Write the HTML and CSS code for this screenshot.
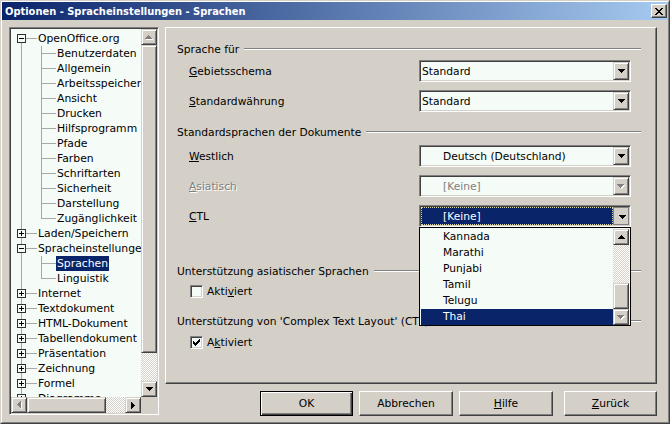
FILE: index.html
```html
<!DOCTYPE html>
<html lang="de">
<head>
<meta charset="utf-8">
<title>Optionen - Spracheinstellungen - Sprachen</title>
<link rel="stylesheet" href="styles.css">
</head>
<body>
<div class="window">
  <div class="frame">
    <div class="titlebar">
      <span class="title">Optionen - Spracheinstellungen - Sprachen</span>
      <span class="close"><svg width="8" height="7" viewBox="0 0 8 7"><path d="M0 0h2v1H0zM6 0h2v1H6zM1 1h2v1H1zM5 1h2v1H5zM2 2h4v1H2zM3 3h2v1H3zM2 4h4v1H2zM1 5h2v1H1zM5 5h2v1H5zM0 6h2v1H0zM6 6h2v1H6z" fill="#000"/></svg></span>
    </div>
    <div class="main">
      <div class="tree">
        <div class="tree-top">
          <div class="rows">
            <div class="row"><span class="g x first"><span class="box minus"></span></span><span class="dash"></span><span class="lbl">OpenOffice.org</span></div>
            <div class="row"><span class="g v"></span><span class="g t"></span><span class="dash c"></span><span class="lbl">Benutzerdaten</span></div>
            <div class="row"><span class="g v"></span><span class="g t"></span><span class="dash c"></span><span class="lbl">Allgemein</span></div>
            <div class="row"><span class="g v"></span><span class="g t"></span><span class="dash c"></span><span class="lbl">Arbeitsspeicher</span></div>
            <div class="row"><span class="g v"></span><span class="g t"></span><span class="dash c"></span><span class="lbl">Ansicht</span></div>
            <div class="row"><span class="g v"></span><span class="g t"></span><span class="dash c"></span><span class="lbl">Drucken</span></div>
            <div class="row"><span class="g v"></span><span class="g t"></span><span class="dash c"></span><span class="lbl">Hilfsprogramm</span></div>
            <div class="row"><span class="g v"></span><span class="g t"></span><span class="dash c"></span><span class="lbl">Pfade</span></div>
            <div class="row"><span class="g v"></span><span class="g t"></span><span class="dash c"></span><span class="lbl">Farben</span></div>
            <div class="row"><span class="g v"></span><span class="g t"></span><span class="dash c"></span><span class="lbl">Schriftarten</span></div>
            <div class="row"><span class="g v"></span><span class="g t"></span><span class="dash c"></span><span class="lbl">Sicherheit</span></div>
            <div class="row"><span class="g v"></span><span class="g t"></span><span class="dash c"></span><span class="lbl">Darstellung</span></div>
            <div class="row"><span class="g v"></span><span class="g l"></span><span class="dash c"></span><span class="lbl">Zugänglichkeit</span></div>
            <div class="row"><span class="g x"><span class="box plus"></span></span><span class="dash"></span><span class="lbl">Laden/Speichern</span></div>
            <div class="row"><span class="g x"><span class="box minus"></span></span><span class="dash"></span><span class="lbl">Spracheinstellungen</span></div>
            <div class="row"><span class="g v"></span><span class="g t"></span><span class="dash c"></span><span class="lbl sel">Sprachen</span></div>
            <div class="row"><span class="g v"></span><span class="g l"></span><span class="dash c"></span><span class="lbl">Linguistik</span></div>
            <div class="row"><span class="g x"><span class="box plus"></span></span><span class="dash"></span><span class="lbl">Internet</span></div>
            <div class="row"><span class="g x"><span class="box plus"></span></span><span class="dash"></span><span class="lbl">Textdokument</span></div>
            <div class="row"><span class="g x"><span class="box plus"></span></span><span class="dash"></span><span class="lbl">HTML-Dokument</span></div>
            <div class="row"><span class="g x"><span class="box plus"></span></span><span class="dash"></span><span class="lbl">Tabellendokument</span></div>
            <div class="row"><span class="g x"><span class="box plus"></span></span><span class="dash"></span><span class="lbl">Präsentation</span></div>
            <div class="row"><span class="g x"><span class="box plus"></span></span><span class="dash"></span><span class="lbl">Zeichnung</span></div>
            <div class="row"><span class="g x"><span class="box plus"></span></span><span class="dash"></span><span class="lbl">Formel</span></div>
            <div class="row"><span class="g x"><span class="box plus"></span></span><span class="dash"></span><span class="lbl">Diagramme</span></div>
          </div>
          <div class="vscroll">
            <div class="sbtn"><svg width="8" height="5" viewBox="0 0 8 5"><path d="M4 1h1v1H4zM3 2h3v1H3zM2 3h5v1H2zM1 4h7v1H1z" fill="#fff"/><path d="M3 0h1v1H3zM2 1h3v1H2zM1 2h5v1H1zM0 3h7v1H0z" fill="#808080"/></svg></div>
            <div class="sthumb vth"></div>
            <div class="strack"></div>
            <div class="sbtn"><svg width="7" height="4" viewBox="0 0 7 4"><path d="M0 0h7v1H0zM1 1h5v1H1zM2 2h3v1H2zM3 3h1v1H3z" fill="#000"/></svg></div>
          </div>
        </div>
        <div class="hscroll">
          <div class="sbtn"><svg width="5" height="8" viewBox="0 0 5 8"><path d="M1 4h1v1H1zM2 3h1v3H2zM3 2h1v5H3zM4 1h1v7H4z" fill="#fff"/><path d="M0 3h1v1H0zM1 2h1v3H1zM2 1h1v5H2zM3 0h1v7H3z" fill="#808080"/></svg></div>
          <div class="sthumb hth"></div>
          <div class="strack htr"></div>
          <div class="sbtn"><svg width="4" height="7" viewBox="0 0 4 7"><path d="M0 0h1v7H0zM1 1h1v5H1zM2 2h1v3H2zM3 3h1v1H3z" fill="#000"/></svg></div>
          <div class="corner"></div>
        </div>
      </div>

      <div class="rightcol">
        <div class="page">
          <div class="head"><span>Sprache für</span><span class="rule"></span></div>
          <div class="field mt3"><span class="flabel"><u>G</u>ebietsschema</span>
            <div class="combo"><div class="ctext">Standard</div><div class="cbtn"><svg width="7" height="4" viewBox="0 0 7 4"><path d="M0 0h7v1H0zM1 1h5v1H1zM2 2h3v1H2zM3 3h1v1H3z" fill="#000"/></svg></div></div>
          </div>
          <div class="field mt8"><span class="flabel"><u>S</u>tandardwährung</span>
            <div class="combo"><div class="ctext">Standard</div><div class="cbtn"><svg width="7" height="4" viewBox="0 0 7 4"><path d="M0 0h7v1H0zM1 1h5v1H1zM2 2h3v1H2zM3 3h1v1H3z" fill="#000"/></svg></div></div>
          </div>

          <div class="head mt12"><span>Standardsprachen der Dokumente</span><span class="rule"></span></div>
          <div class="field mt5"><span class="flabel"><u>W</u>estlich</span>
            <div class="combo"><div class="ctext lang">Deutsch (Deutschland)</div><div class="cbtn"><svg width="7" height="4" viewBox="0 0 7 4"><path d="M0 0h7v1H0zM1 1h5v1H1zM2 2h3v1H2zM3 3h1v1H3z" fill="#000"/></svg></div></div>
          </div>
          <div class="field mt8"><span class="flabel disabled"><u>A</u>siatisch</span>
            <div class="combo"><div class="ctext lang gray">[Keine]</div><div class="cbtn"><svg width="8" height="5" viewBox="0 0 8 5"><path d="M1 1h7v1H1zM2 2h5v1H2zM3 3h3v1H3zM4 4h1v1H4z" fill="#fff"/><path d="M0 0h7v1H0zM1 1h5v1H1zM2 2h3v1H2zM3 3h1v1H3z" fill="#808080"/></svg></div></div>
          </div>
          <div class="field mt8"><span class="flabel"><u>C</u>TL</span>
            <div class="combo open"><div class="ctext lang focus">[Keine]</div><div class="cbtn pressed"><svg width="7" height="4" viewBox="0 0 7 4"><path d="M0 0h7v1H0zM1 1h5v1H1zM2 2h3v1H2zM3 3h1v1H3z" fill="#000"/></svg></div>
              <div class="dlist">
                <div class="items">
                  <div class="item">Kannada</div>
                  <div class="item">Marathi</div>
                  <div class="item">Punjabi</div>
                  <div class="item">Tamil</div>
                  <div class="item">Telugu</div>
                  <div class="item hi">Thai</div>
                </div>
                <div class="lscroll">
                  <div class="sbtn"><svg width="7" height="4" viewBox="0 0 7 4"><path d="M3 0h1v1H3zM2 1h3v1H2zM1 2h5v1H1zM0 3h7v1H0z" fill="#000"/></svg></div>
                  <div class="strack ltr"></div>
                  <div class="sthumb lth"></div>
                  <div class="sbtn"><svg width="8" height="5" viewBox="0 0 8 5"><path d="M1 1h7v1H1zM2 2h5v1H2zM3 3h3v1H3zM4 4h1v1H4z" fill="#fff"/><path d="M0 0h7v1H0zM1 1h5v1H1zM2 2h3v1H2zM3 3h1v1H3z" fill="#808080"/></svg></div>
                </div>
              </div>
            </div>
          </div>

          <div class="head mt36"><span>Unterstützung asiatischer Sprachen</span><span class="rule"></span></div>
          <div class="check mt4"><span class="cbox"></span><span>Akti<u>v</u>iert</span></div>

          <div class="head mt14"><span>Unterstützung von 'Complex Text Layout' (CTL)</span><span class="rule"></span></div>
          <div class="check mt5"><span class="cbox"><svg width="7" height="7" viewBox="0 0 7 7"><path d="M0 2h1v3H0zM1 3h1v3H1zM2 4h1v3H2zM3 3h1v3H3zM4 2h1v3H4zM5 1h1v3H5zM6 0h1v3H6z" fill="#000"/></svg></span><span>A<u>k</u>tiviert</span></div>
        </div>

        <div class="buttons">
          <div class="btn default w93">OK</div>
          <div class="btn">Abbrechen</div>
          <div class="btn"><span><u>H</u>ilfe</span></div>
          <div class="btn w93 gap"><span><u>Z</u>urück</span></div>
        </div>
      </div>
    </div>
  </div>
</div>
</body>
</html>
```

FILE: styles.css
```css
* { box-sizing: border-box; }
html, body { margin: 0; padding: 0; }
body {
  width: 670px; height: 424px; overflow: hidden;
  background: #d4d0c8;
  font-family: "DejaVu Sans", "Liberation Sans", sans-serif;
  font-size: 10.7px; color: #000;
}
u { text-decoration: underline; text-underline-offset: 1px; }

.window {
  width: 670px; height: 424px;
  border: 1px solid; border-color: #d4d0c8 #404040 #404040 #d4d0c8;
}
.frame {
  height: 100%;
  border: 1px solid; border-color: #fff #808080 #808080 #fff;
  display: flex; flex-direction: column;
}
.titlebar {
  height: 18px; flex: none;
  display: flex; align-items: center;
  background: linear-gradient(to right, #0a246a, #a6caf0);
  color: #fff;
}
.title {
  flex: 1;
  padding-left: 3px;
  font-family: "DejaVu Sans Condensed", "DejaVu Sans", sans-serif;
  font-stretch: condensed;
  font-weight: bold; font-size: 11px;
  white-space: nowrap;
}
.close {
  width: 16px; height: 14px; margin-right: 1px;
  background: #d4d0c8;
  border: 1px solid; border-color: #fff #404040 #404040 #fff;
  box-shadow: inset -1px -1px #808080;
  display: flex; align-items: center; justify-content: center;
}
.close svg { display: block; }

.main {
  flex: 1;
  display: flex; align-items: flex-start;
  padding: 7px 0 0 7px;
}

/* tree */
.tree {
  width: 150px; height: 388px; flex: none;
  margin-right: 6px;
  border: 1px solid; border-color: #808080 #fff #fff #808080;
  box-shadow: inset 1px 1px #404040, inset -1px -1px #d4d0c8;
  background: #f5fbf7;
  padding: 1px;
  display: flex; flex-direction: column;
}
.tree-top { flex: 1; min-height: 0; display: flex; }
.rows {
  flex: 1; min-width: 0; overflow: hidden;
  padding-top: 2px;
  font-size: 10.8px;
}
.row { display: flex; height: 15px; white-space: nowrap; }
.g { width: 20px; height: 15px; flex: none; }
.g.v { background: linear-gradient(#a8a8a8, #a8a8a8) 10px 0 / 1px 15px no-repeat; }
.g.t, .g.x {
  background:
    linear-gradient(#a8a8a8, #a8a8a8) 10px 0 / 1px 15px no-repeat,
    linear-gradient(#a8a8a8, #a8a8a8) 10px 7px / 10px 1px no-repeat;
}
.g.l {
  background:
    linear-gradient(#a8a8a8, #a8a8a8) 10px 0 / 1px 8px no-repeat,
    linear-gradient(#a8a8a8, #a8a8a8) 10px 7px / 10px 1px no-repeat;
}
.g.x.first {
  background:
    linear-gradient(#a8a8a8, #a8a8a8) 10px 7px / 1px 8px no-repeat,
    linear-gradient(#a8a8a8, #a8a8a8) 10px 7px / 10px 1px no-repeat;
}
.g.x { display: flex; align-items: center; padding-left: 6px; }
.box {
  width: 9px; height: 9px;
  border: 1px solid #303030;
}
.box.minus { background: linear-gradient(#000, #000) 1px 3px / 5px 1px no-repeat, #f5fbf7; }
.box.plus {
  background:
    linear-gradient(#000, #000) 1px 3px / 5px 1px no-repeat,
    linear-gradient(#000, #000) 3px 1px / 1px 5px no-repeat,
    #f5fbf7;
}
.dash { width: 6px; height: 15px; flex: none; background: linear-gradient(#a8a8a8, #a8a8a8) 0 7px / 100% 1px no-repeat; }
.dash.c { width: 5px; }
.lbl { padding: 0 1px; line-height: 15px; height: 15px; }
.lbl.sel { background: #0a246a; color: #fff; }

/* scrollbars */
.vscroll { width: 16px; flex: none; display: flex; flex-direction: column; }
.hscroll { height: 16px; flex: none; display: flex; }
.sbtn, .sthumb {
  background: #d4d0c8;
  border: 1px solid; border-color: #d4d0c8 #404040 #404040 #d4d0c8;
  box-shadow: inset 1px 1px #fff, inset -1px -1px #808080;
}
.sbtn { width: 16px; height: 16px; flex: none; display: flex; align-items: center; justify-content: center; }
.sbtn svg { display: block; }
.strack { background: repeating-conic-gradient(#d4d0c8 0 25%, #fff 0 50%) 0 0 / 2px 2px; }
.vth { height: 308px; flex: none; }
.vscroll .strack { flex: 1; }
.hth { width: 79px; flex: none; }
.htr { width: 19px; flex: none; }
.corner { width: 16px; flex: none; background: #d4d0c8; }

/* right side */
.rightcol { width: 492px; flex: none; display: flex; flex-direction: column; }
.page {
  height: 357px;
  border: 1px solid; border-color: #fff #404040 #404040 #fff;
  box-shadow: inset -1px -1px #808080;
  padding: 13px 15px 0 11px;
  display: flex; flex-direction: column;
}
.head { height: 16px; flex: none; display: flex; align-items: center; white-space: nowrap; }
.rule {
  flex: 1; min-width: 0; height: 2px; margin-left: 5px;
  border-top: 1px solid #808080; border-bottom: 1px solid #fff;
}
.field { height: 22px; flex: none; display: flex; align-items: center; padding-left: 12px; }
.flabel { width: 230px; flex: none; }
.flabel.disabled { color: #808080; text-shadow: 1px 1px 0 #fff; }

.mt3 { margin-top: 3px; }
.mt4 { margin-top: 4px; }
.mt5 { margin-top: 5px; }
.mt8 { margin-top: 8px; }
.mt12 { margin-top: 12px; }
.mt14 { margin-top: 14px; }
.mt36 { margin-top: 36px; }

.combo {
  position: relative;
  width: 212px; height: 22px; flex: none;
  border: 1px solid; border-color: #808080 #fff #fff #808080;
  box-shadow: inset 1px 1px #404040, inset -1px -1px #d4d0c8;
  background: #f5fbf7;
  padding: 1px;
  display: flex;
}
.ctext { flex: 1; display: flex; align-items: center; padding-left: 1px; white-space: nowrap; }
.ctext.lang { padding-left: 22px; }
.ctext.gray { color: #808080; }
.ctext.focus {
  background: #0a246a; color: #fff;
  border: 1px dotted #d8d8a8;
  padding-left: 21px;
}
.cbtn {
  width: 16px; flex: none;
  background: #d4d0c8;
  border: 1px solid; border-color: #d4d0c8 #404040 #404040 #d4d0c8;
  box-shadow: inset 1px 1px #fff, inset -1px -1px #808080;
  display: flex; align-items: center; justify-content: center;
}
.cbtn svg { display: block; }
.cbtn.pressed { border-color: #808080; box-shadow: none; padding: 2px 0 0 2px; }

.dlist {
  position: absolute; left: -1px; top: 21px;
  width: 212px; height: 99px;
  border: 1px solid #000;
  background: #f5fbf7;
  padding: 1px;
  display: flex;
  z-index: 2;
}
.items { flex: 1; }
.item { height: 16px; line-height: 16px; padding-left: 22px; white-space: nowrap; }
.item.hi { background: #0a246a; color: #fff; }
.lscroll { width: 16px; flex: none; display: flex; flex-direction: column; }
.ltr { height: 38px; flex: none; }
.lth { height: 26px; flex: none; }

.check { height: 16px; flex: none; display: flex; align-items: center; padding-left: 13px; }
.cbox {
  width: 13px; height: 13px; flex: none; margin-right: 4px;
  border: 1px solid; border-color: #808080 #fff #fff #808080;
  box-shadow: inset 1px 1px #404040, inset -1px -1px #d4d0c8;
  background: #f5fbf7;
  display: flex; align-items: center; justify-content: center;
}
.cbox svg { display: block; }

.buttons { display: flex; justify-content: flex-end; margin-top: 7px; gap: 6px; }
.btn {
  width: 94px; height: 25px;
  background: #d4d0c8;
  border: 1px solid; border-color: #fff #404040 #404040 #fff;
  box-shadow: inset -1px -1px #808080;
  display: flex; align-items: center; justify-content: center;
  white-space: nowrap;
}
.btn.w93 { width: 93px; }
.btn.gap { margin-left: 5px; }
.btn.default {
  border: 1px solid #000;
  box-shadow: inset 1px 1px #fff, inset -1px -1px #404040, inset -2px -2px #808080;
}
```
